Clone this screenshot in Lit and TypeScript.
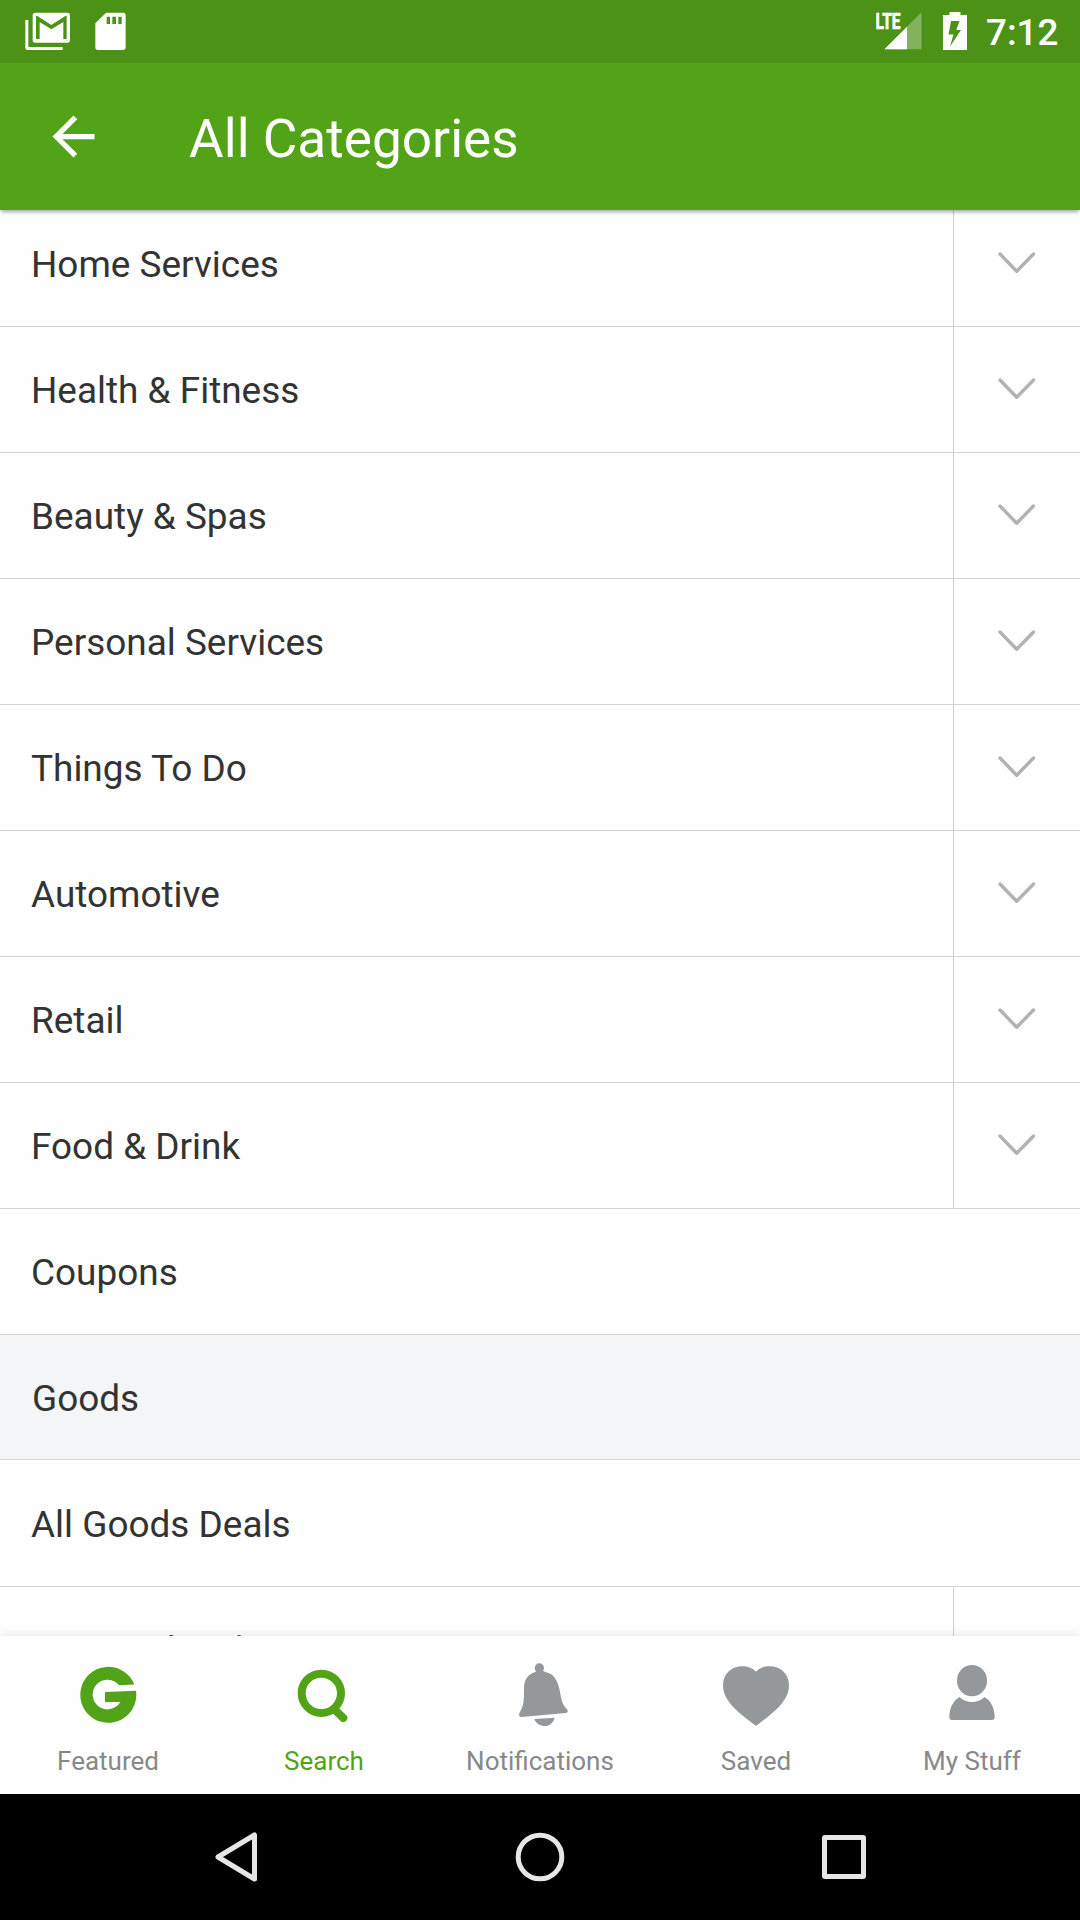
import { LitElement, html, css, svg, nothing } from "lit";
import { customElement, property } from "lit/decorators.js";
import { classMap } from "lit/directives/class-map.js";

interface Category {
  name: string;
  expandable?: boolean;
  heading?: boolean;
  first?: boolean;
}

const CATEGORIES: Category[] = [
  { name: "Home Services", expandable: true },
  { name: "Health & Fitness", expandable: true },
  { name: "Beauty & Spas", expandable: true },
  { name: "Personal Services", expandable: true },
  { name: "Things To Do", expandable: true },
  { name: "Automotive", expandable: true },
  { name: "Retail", expandable: true },
  { name: "Food & Drink", expandable: true },
  { name: "Coupons" },
  { name: "Goods", heading: true },
  { name: "All Goods Deals", first: true },
  { name: "Personalized Items", expandable: true },
];

const TABS = [
  {
    label: "Featured",
    viewBox: "225 276 198 198",
    brand: true,
    icon: svg`<path d="M403 343.500A84 84 0 1 0 408 362L315 366V396H361A44.500 44.500 0 1 1 357 345.500Z"/>`,
  },
  {
    label: "Search",
    viewBox: "873 276 198 198",
    brand: true,
    active: true,
    icon: svg`<circle cx="964" cy="370" r="59" fill="none" stroke="currentColor" stroke-width="24"/><path d="M1006 421L1030 444" stroke="currentColor" stroke-width="24" stroke-linecap="round"/>`,
  },
  {
    label: "Notifications",
    viewBox: "321 126 198 198",
    icon: svg`<circle cx="418" cy="144" r="14"/><path d="M406 156C381 163 372 182 372 207C372 247 371 256 358 280Q355 291 364 291L498 279Q506 276 502 269C487 253 485 243 481 221C475 184 463 161 436 156L430 153H408Z"/><path d="M403 297L464 293C460 309 448 318 434 318C420 318 408 311 403 297Z"/>`,
  },
  {
    label: "Saved",
    viewBox: "69 276 198 198",
    icon: svg`<path d="M168 305C158 295 144 289 128 289C94 289 69 311 69 347C69 383 98 413 136 443L164 465Q168 469 172 465L200 443C238 413 267 383 267 347C267 311 242 289 208 289C192 289 178 295 168 305Z"/>`,
  },
  {
    label: "My Stuff",
    viewBox: "717 276 198 198",
    icon: svg`<ellipse cx="816" cy="332" rx="45" ry="47"/><path d="M778 381C759 393 748 414 748 442Q748 450 756 450H876Q884 450 884 442C884 414 873 393 854 381C831 401 801 401 778 381Z"/>`,
  },
];

@customElement("status-bar")
export class StatusBar extends LitElement {
  static styles = css`
    :host {
      display: flex;
      justify-content: space-between;
      height: 63px;
      background: #4b9217;
      color: #fff;
    }
    .icon {
      display: block;
      fill: currentColor;
    }
    .right {
      display: flex;
    }
    .lte {
      font: 700 21.5px Roboto, sans-serif;
      stroke: currentColor;
      stroke-width: 0.7;
    }
    .clock {
      width: 94px;
      font: 500 36.75px/65px Roboto, sans-serif;
      white-space: nowrap;
    }
  `;

  render() {
    return html`
      <svg class="icon" width="140" height="63" viewBox="0 0 420 189">
        <path d="M76 60H85V141H188V150H83Q76 150 76 143Z" />
        <path
          fill-rule="evenodd"
          d="M106 38H202Q210 38 210 46V120Q210 128 202 128H106Q98 128 98 120V46Q98 38 106 38ZM108 117H119V66L154 88L190 66V117H200V48H196L154 75L112 48H108Z"
        />
        <path
          fill-rule="evenodd"
          d="M318 38H369Q377 38 377 46V142Q377 150 369 150H294Q286 150 286 142V70ZM320 50V72H330V50ZM337 50V72H348V50ZM355 50V72H365V50Z"
        />
      </svg>
      <div class="right">
        <svg class="icon" width="110" height="63" viewBox="0 0 110 63">
          <text class="lte" x="-0.500" y="29" textLength="25" lengthAdjust="spacingAndGlyphs">LTE</text>
          <path d="M8.500 49.300L45.500 12.300V49.300Z" opacity=".3" />
          <path d="M8.500 49.300L31 26.800V49.300Z" />
          <path
            fill-rule="evenodd"
            d="M73.500 12H84.500V15H91V50H67V15H73.500ZM75 21L72.500 34.500H77.500L74 46.500L85 30H80.300L83.500 21Z"
          />
        </svg>
        <div class="clock">7:12</div>
      </div>
    `;
  }
}

@customElement("app-header")
export class AppHeader extends LitElement {
  @property() heading = "";

  static styles = css`
    :host {
      display: flex;
      align-items: center;
      height: 147px;
      background: #53a318;
      color: #fff;
      position: relative;
      z-index: 1;
      box-shadow: 0 3px 4px -1px rgba(0, 0, 0, 0.35);
    }
    .back {
      display: block;
      width: 63px;
      height: 63px;
      margin-left: 42px;
      fill: currentColor;
    }
    .title {
      margin-left: 84px;
      padding-top: 4px;
      font: 400 53.2px/62px Roboto, sans-serif;
    }
  `;

  render() {
    return html`
      <svg class="back" viewBox="0 0 24 24">
        <path d="M20 11H7.830l5.590-5.590L12 4l-8 8 8 8 1.410-1.410L7.830 13H20v-2z" />
      </svg>
      <div class="title">${this.heading}</div>
    `;
  }
}

@customElement("category-row")
export class CategoryRow extends LitElement {
  @property({ attribute: false }) category!: Category;

  static styles = css`
    :host {
      display: block;
    }
    .row {
      display: flex;
      box-sizing: border-box;
      height: 126px;
      border-bottom: 1px solid #d5d5d7;
    }
    .heading {
      height: 125px;
      background: #f4f5f7;
    }
    .first {
      height: 127px;
      padding-top: 1px;
    }
    .name {
      flex: 1;
      padding-left: 31px;
      font: 400 36.95px/127px Roboto, sans-serif;
      color: #333;
    }
    .heading .name {
      padding-left: 32px;
    }
    .toggle {
      box-sizing: border-box;
      width: 127px;
      border-left: 1px solid #d0d0d2;
      display: flex;
      align-items: center;
      justify-content: center;
    }
    .chevron {
      fill: none;
      stroke: #b2b2b2;
      stroke-width: 3.4;
      stroke-linecap: round;
      stroke-linejoin: round;
    }
  `;

  render() {
    const { name, expandable, heading, first } = this.category;
    return html`
      <div class=${classMap({ row: true, heading: !!heading, first: !!first })}>
        <div class="name">${name}</div>
        ${expandable
          ? html`<div class="toggle">
              <svg class="chevron" width="40" height="40" viewBox="0 0 40 40">
                <path d="M3 10L19.700 27.200L36.500 10" />
              </svg>
            </div>`
          : nothing}
      </div>
    `;
  }
}

@customElement("tab-bar")
export class TabBar extends LitElement {
  static styles = css`
    :host {
      display: grid;
      grid-template-columns: repeat(5, 1fr);
      height: 158px;
      background: #fefefe;
      position: relative;
      z-index: 1;
      box-shadow: 0 0 12px rgba(0, 0, 0, 0.12);
    }
    .tab {
      display: flex;
      flex-direction: column;
      align-items: center;
      padding-top: 26px;
      color: #888;
    }
    .icon {
      display: block;
      width: 66px;
      height: 66px;
      color: #95989a;
      fill: currentColor;
    }
    .brand,
    .active {
      color: #53a318;
    }
    .label {
      margin-top: 18px;
      font: 400 26px/30px Roboto, sans-serif;
      white-space: nowrap;
    }
  `;

  render() {
    return TABS.map(
      (tab) => html`
        <div class=${classMap({ tab: true, active: !!tab.active })}>
          <svg class=${classMap({ icon: true, brand: !!tab.brand })} viewBox=${tab.viewBox}>${tab.icon}</svg>
          <div class="label">${tab.label}</div>
        </div>
      `
    );
  }
}

@customElement("system-nav")
export class SystemNav extends LitElement {
  static styles = css`
    :host {
      display: grid;
      grid-template-columns: repeat(3, 304px);
      justify-content: center;
      align-items: center;
      justify-items: center;
      height: 126px;
      background: #000;
    }
    .button {
      fill: none;
      stroke: #e6e6e6;
      stroke-width: 5;
      stroke-linejoin: round;
    }
  `;

  render() {
    return html`
      <svg class="button" width="60" height="60" viewBox="0 0 60 60">
        <path d="M12 30L48.500 8V52Z" />
      </svg>
      <svg class="button" width="60" height="60" viewBox="0 0 60 60">
        <circle cx="30" cy="30" r="21.800" />
      </svg>
      <svg class="button" width="60" height="60" viewBox="0 0 60 60">
        <rect x="10.500" y="10.500" width="39" height="39" rx="0.500" />
      </svg>
    `;
  }
}

@customElement("app-root")
export class AppRoot extends LitElement {
  static styles = css`
    :host {
      display: flex;
      flex-direction: column;
      width: 1080px;
      height: 1920px;
      overflow: hidden;
      background: #fefefe;
    }
    .content {
      flex: 1;
      min-height: 0;
      overflow: hidden;
    }
    .list {
      margin-top: -9px;
    }
  `;

  render() {
    return html`
      <status-bar></status-bar>
      <app-header heading="All Categories"></app-header>
      <main class="content">
        <div class="list">
          ${CATEGORIES.map((c) => html`<category-row .category=${c}></category-row>`)}
        </div>
      </main>
      <tab-bar></tab-bar>
      <system-nav></system-nav>
    `;
  }
}
